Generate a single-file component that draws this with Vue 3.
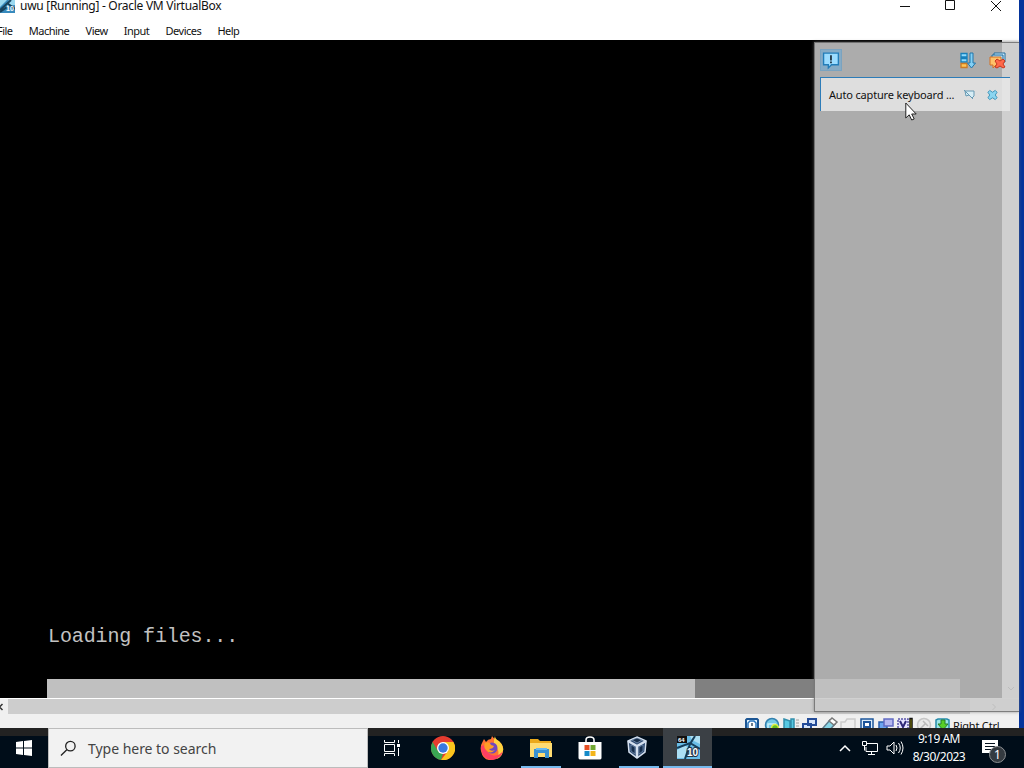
<script setup>
import { ref } from "vue";

const menus = ref(["File", "Machine", "View", "Input", "Devices", "Help"]);
const progress = ref(71);
</script>

<template>
  <div class="desktop">
    <section class="vm-window">
      <header class="title-bar">
        <svg class="title-icon" viewBox="0 0 15 13">
          <path d="M0 0h15v13H0z" fill="#388abd" />
          <path d="M0 0h7L0 7zM9 0h6v5l-8 1z" fill="#9bd8ef" />
          <path d="M0 10 11 0M7 3l8 6M0 12l7-5" stroke="#17435e" stroke-width="2" />
          <text x="6" y="11" class="mini-ten">10</text>
        </svg>
        <span class="title-text">uwu [Running] - Oracle VM VirtualBox</span>
        <svg class="window-buttons" viewBox="0 0 104 14" fill="none" stroke="#111">
          <path d="M1 6.500h10M46.500 .5h9v9h-9zM92 1l10 10M102 1 92 11" />
        </svg>
      </header>

      <nav class="menu-bar">
        <span v-for="menu in menus" :key="menu">{{ menu }}</span>
      </nav>

      <div class="viewport">
        <main class="guest-screen">
          <p class="loading">Loading files...</p>
          <div class="progress">
            <div class="progress-fill" :style="{ width: progress + '%' }"></div>
          </div>
        </main>
        <div class="vertical-scroll">
          <svg viewBox="0 0 8 6" fill="none" stroke="#777">
            <path d="m1 1 3 3 3-3" />
          </svg>
        </div>
      </div>
      <div class="horizontal-scroll">
        <svg viewBox="0 0 4 8" fill="none" stroke="#333" stroke-width="1.500">
          <path d="M2.500 1-.5 4l3 3" />
        </svg>
        <svg viewBox="0 0 4 8" fill="none" stroke="#777">
          <path d="m.5 1 3 3-3 3" />
        </svg>
      </div>

      <footer class="status-bar">
        <svg class="status-icons" viewBox="0 0 208 14">
          <g stroke-width="1.500">
            <path d="M2 16V6l1-1h10l1 1v10" fill="#eaf8ff" stroke="#1c5694" stroke-width="2" />
            <path d="M4 14V9l2-2h4l2 2v5" fill="#fff" stroke="#2974bd" />
            <path d="M7 9h2v3H7z" fill="#6b7b8b" />
            <circle cx="28" cy="11" r="6.500" fill="#74c9e8" stroke="#3380ae" />
            <path d="M24 14v-4h8" fill="none" stroke="#c6effa" />
            <circle cx="31" cy="14" r="3.500" fill="#66be23" stroke="#e1ed48" />
            <path d="m40 5 6 2v9h-6zM47 5h3v12h-3z" fill="#57c9e2" stroke="#328fac" />
            <path d="M52 6h3M52 9h3M52 12h3" stroke="#bbb" />
            <path d="M64 5h8v6h-8zM59 10h8v5h-8z" fill="#d5e4f9" stroke="#244c98" stroke-width="2" />
            <path d="m79 14 7-8 5 4-7 8z" fill="#87d5e6" stroke="#5d7b8b" />
            <path d="m85 7 3-3 5 4-3 3z" fill="#fff" stroke="#777" />
            <path d="M97 8h4l2-3h8v12H97z" fill="#eee" stroke="#ccc" />
            <path d="M117 5h12v10h-12z" fill="#dcecf8" stroke="#1d559b" />
            <path d="M120 8h6v5h-6z" fill="#fff" stroke="#1d559b" stroke-width="2" />
            <path d="M135 8h8v7h-8z" fill="#6ba4ef" stroke="#285dac" />
            <path d="M140 5h9v7h-9z" fill="#b5b7ef" stroke="#626bc3" />
            <path d="M154 5h10v11h-10z" fill="#e5e3ff" stroke="#5956a8" stroke-dasharray="2 1" />
            <path d="m156 7 3 6 3-6" fill="none" stroke="#2e2878" stroke-width="2" />
            <path d="M166 4.500h2v11h-2z" fill="#fff100" stroke="#111" />
            <circle cx="180" cy="11" r="6.500" fill="#e9e9e9" stroke="#c7c7c7" />
            <path d="m176 15 6-6m-3-2 5 5" stroke="#bbb" />
            <path d="M192 16V6l2-1h9l2 1v10" fill="#9be5e5" stroke="#268bab" />
            <path d="M197 6h4v4h3l-5 6-5-6h3z" fill="#58ce27" stroke="#267f28" stroke-width="1" />
          </g>
        </svg>
        <span class="host-key">Right Ctrl</span>
      </footer>

      <aside class="notifications">
        <div class="notice-tools">
          <div class="notice-toggle">
            <svg viewBox="0 0 18 18">
              <path d="M1.500 2h14v11H9l-3 3v-3H1.500z" fill="#9bdcff" stroke="#227db9" stroke-width="1.300" />
              <path d="M8.500 4v5m0 1v1.500" stroke="#101c28" stroke-width="1.500" />
            </svg>
          </div>
          <svg class="sort-icon" viewBox="0 0 16 17" fill="none">
            <path d="M1 1.500h6v3.500H1zM1 6.500h6v3.500H1z" fill="#8edbff" stroke="#1780bc" stroke-width="1.300" />
            <path d="M1 11.500h6v4H1z" fill="#ffc557" stroke="#cb7b24" stroke-width="1.300" />
            <path d="M10 1h3v10h2.500l-4 5-4-5H10z" fill="#83d0f5" stroke="#2076ac" />
          </svg>
          <svg class="clear-icon" viewBox="0 0 17 17">
            <path d="M5 5V1h11v9h-3" fill="#cbeafa" stroke="#226d9e" />
            <path d="M3 6V3h11v7" fill="#b1dcf3" stroke="#226d9e" />
            <path d="M1 5h11v8H7l-3 3v-3H1z" fill="#ffc168" stroke="#d47124" />
            <path d="m8 7 3 2 3-2 2 2-2 3 2 3-2 1-3-2-3 2-2-1 2-3-2-3z" fill="#ff6849" stroke="#c6371e" />
          </svg>
        </div>
        <article class="notice">
          <span class="notice-text">Auto capture keyboard ...</span>
          <svg viewBox="0 0 12 12">
            <path d="M2 2h9v5L9 9 6 6 3 7zM1 1l9 9" fill="#d7edf5" stroke="#6699b3" />
          </svg>
          <svg viewBox="0 0 12 12">
            <path d="m3 1 3 2 3-2 2 2-2 3 2 3-2 2-3-2-3 2-2-2 2-3-2-3z" fill="#8bd5f0" stroke="#398fb6" />
          </svg>
        </article>
      </aside>
    </section>

    <footer class="taskbar">
      <div class="start">
        <svg viewBox="0 0 16 16" fill="#fff">
          <path d="m0 2 7-1v6.500H0zM8 1l8-1v7.500H8zM0 8.500h7V15l-7-1zM8 8.500h8V16l-8-1z" />
        </svg>
      </div>
      <div class="search">
        <svg viewBox="0 0 18 18" fill="none" stroke="#222" stroke-width="1.400">
          <circle cx="11" cy="6.500" r="5" />
          <path d="m7.500 10-6.500 6.500" />
        </svg>
        <span>Type here to search</span>
      </div>
      <div class="task task-view">
        <svg viewBox="0 0 16 16" fill="none" stroke="#fff">
          <path d="M.5 0v2.500h10V0M.5 16v-2.500h10V16M.5 4.500h10v7H.5zM14.500 0v3M14.500 8v8" />
          <path d="M13 4h3v3h-3z" fill="#fff" stroke="none" />
        </svg>
      </div>
      <div class="task">
        <svg class="app-icon" viewBox="0 0 24 24">
          <circle cx="12" cy="12" r="12" fill="#e63c2f" />
          <path d="M1.600 6 7 15l5 3-2 6A12 12 0 0 1 1.600 6z" fill="#3aa653" />
          <path d="M12 6h10.400A12 12 0 0 1 10 24l7-9z" fill="#fbc51d" />
          <circle cx="12" cy="12" r="6" fill="#fff" />
          <circle cx="12" cy="12" r="4.700" fill="#3979df" />
        </svg>
      </div>
      <div class="task">
        <svg class="app-icon" viewBox="0 0 24 24">
          <path d="M2 7 4 3l2 3q2-3 5-3l1-3q3 4 5 4 7 4 6 11-2 8-11 9T1 15Q0 10 2 7z" fill="#ff7432" />
          <path d="M15 0q0 3 4 5 5 5 4 10-1 6-6 8 3-6 0-11-5-5-2-12z" fill="#ffd43f" />
          <path d="M1 10q0 13 11 14 9-1 11-9-5 6-11 4T5 9z" fill="#ff3f62" />
          <circle cx="12" cy="12" r="5.500" fill="#7149bd" />
          <path d="M5 7q5-2 6 2l3 1q-1 3-5 3 2 3 6 1-5 5-9 0-3-3-1-7z" fill="#ff9e25" />
        </svg>
      </div>
      <div class="task running">
        <svg class="app-icon" viewBox="0 0 24 24">
          <path d="M1 3h8l2 2h11v16H1z" fill="#eba91b" />
          <path d="M1 7h22v14H1z" fill="#ffdc72" />
          <path d="M5 13h15v9h-4v-5H9v5H5z" fill="#3a91d1" />
          <path d="M7 12h11v2H7z" fill="#68baf0" />
        </svg>
      </div>
      <div class="task">
        <svg class="app-icon" viewBox="0 0 24 24">
          <path d="M8 8V4q0-3 4-3t4 3v4" fill="none" stroke="#fff" stroke-width="1.500" />
          <path d="M.5 6h23v16q0 1.500-2 1.500h-19q-2 0-2-1.500z" fill="#fff" />
          <path d="M6.500 9h5v5h-5z" fill="#e65025" />
          <path d="M12.500 9h5v5h-5z" fill="#72a832" />
          <path d="M6.500 15h5v5h-5z" fill="#168bc9" />
          <path d="M12.500 15h5v5h-5z" fill="#f4b51b" />
        </svg>
      </div>
      <div class="task running vbox">
        <svg class="app-icon" viewBox="0 0 24 24" stroke="#d4e0ef" stroke-width="1.500">
          <path d="m12 1 9 4-1 11-8 6-8-6L3 5z" fill="#304c72" />
          <path d="m3 5 9 5 9-5M12 10v12" fill="none" stroke-width="2.500" />
          <path d="m6 9 4 2v7l-4-3zM18 9l-4 2v7l4-3z" fill="#152d4c" stroke="#7895b7" stroke-width=".7" />
          <path d="m7 4 5-2 5 2-5 3z" fill="#182f4b" stroke="#8ba4c2" stroke-width=".7" />
        </svg>
      </div>
      <div class="task running active">
        <svg class="app-icon" viewBox="0 0 24 24">
          <path d="M1 0h23v23H1z" fill="#69bde7" />
          <path d="m1 14 8-5 4 4-5 9H1zM14 0h10v8l-8-4z" fill="#acdff3" />
          <path d="m1 12 13-5 10 6M19 0l-5 8-5 15" fill="none" stroke="#163f5b" stroke-width="2" />
          <path d="M1 0h10v7H1z" fill="#111" />
          <text x="2" y="6" class="bits">64</text>
          <text x="11" y="20" class="version">10</text>
        </svg>
      </div>
      <div class="tray">
        <svg class="chevron" viewBox="0 0 12 8" fill="none" stroke="#fff" stroke-width="1.500">
          <path d="m1 7 5-5 5 5" />
        </svg>
        <svg class="network" viewBox="0 0 17 15" fill="none" stroke="#fff">
          <path d="M5 2.500h10.500v8H4V6M9.500 10.500v3M6 13.500h7M.5.500h4v4h-4zM2.500 4.500v5" />
        </svg>
        <svg class="sound" viewBox="0 0 18 14" fill="none" stroke="#fff">
          <path d="M1 5h3l4-4v12L4 9H1zM10 4q2 3 0 6M12.500 2q3.500 5 0 10M15 .5q4 6.500 0 13" />
        </svg>
        <div class="clock"><span>9:19 AM</span><span>8/30/2023</span></div>
        <div class="action-center">
          <svg viewBox="0 0 16 16">
            <path d="M0 0h16v13h-4v3l-3-3H0z" fill="#fff" />
            <path d="M3 3.500h10M3 6.500h10M3 9.500h7" stroke="#071420" />
          </svg>
          <span class="badge">1</span>
        </div>
      </div>
    </footer>

    <svg class="cursor" viewBox="0 0 12 19">
      <path d="M.8 1v15l3.400-3.200L6.700 18l2.500-1-2.500-5h4.500z" fill="#fff" stroke="#222" />
    </svg>
  </div>
</template>

<style>
html,
body {
  margin: 0;
  overflow: hidden;
}
</style>

<style scoped>
* {
  box-sizing: border-box;
}

svg {
  display: block;
  flex-shrink: 0;
}

.desktop {
  position: relative;
  width: 1024px;
  height: 768px;
  background: #05349b;
  font-family: "Noto Sans", "Open Sans", sans-serif;
  color: #111;
  overflow: hidden;
}

.vm-window {
  position: relative;
  width: 1019px;
  height: 728px;
  background: #fff;
}

.title-bar {
  display: flex;
  height: 20px;
}

.title-icon {
  width: 15px;
  height: 13px;
}

.mini-ten {
  font: bold 7px "Liberation Sans", sans-serif;
  fill: white;
}

.title-text {
  margin: 0 0 0 5px;
  font-size: 12px;
  line-height: 12px;
  letter-spacing: -0.29px;
  white-space: pre;
}

.window-buttons {
  width: 104px;
  height: 14px;
  margin-left: auto;
  margin-right: 16px;
}

.menu-bar {
  display: flex;
  gap: 16.3px;
  height: 20px;
  margin-left: -3px;
  font-size: 11px;
  line-height: 22px;
  letter-spacing: -0.52px;
}

.viewport {
  display: flex;
  height: 658px;
}

.guest-screen {
  display: flex;
  flex-direction: column;
  justify-content: flex-end;
  width: 1002px;
  padding-left: 47px;
  background: #000;
}

.loading {
  margin: 0 0 30px 1px;
  color: #c2c2c2;
  font: 20px/24px "Liberation Mono", monospace;
  letter-spacing: -0.12px;
}

.progress {
  width: 913px;
  height: 19px;
  background: #808080;
}

.progress-fill {
  height: 100%;
  background: #c0c0c0;
}

.vertical-scroll {
  display: flex;
  justify-content: center;
  align-items: flex-end;
  width: 17px;
  padding-bottom: 6px;
  background: #f0f0f0;
}

.vertical-scroll svg {
  width: 8px;
  height: 6px;
}

.horizontal-scroll {
  display: flex;
  justify-content: space-between;
  align-items: center;
  height: 16px;
  padding-right: 23px;
  border-top: 1px solid white;
  background: linear-gradient(90deg, #f0f0f0 8px, #cdcdcd 8px, #cdcdcd 970px, #f0f0f0 970px);
}

.horizontal-scroll svg {
  width: 4px;
  height: 8px;
}

.status-bar {
  display: flex;
  height: 14px;
  padding-left: 744px;
  background: #f0f0f0;
}

.status-icons {
  width: 208px;
  height: 14px;
}

.host-key {
  margin: 3px 0 0 1px;
  font-size: 11px;
  line-height: 18px;
  letter-spacing: -0.2px;
  white-space: nowrap;
}

/* floats over the guest display and its scrollbars */
.notifications {
  position: absolute;
  top: 42px;
  left: 814px;
  width: 205px;
  height: 670px;
  padding-left: 6px;
  background: rgba(201, 201, 201, 0.854);
  border: 1px solid rgba(90, 90, 90, 0.7);
  border-right: none;
  box-shadow: 0 0 3px rgba(110, 110, 110, 0.7);
}

.notice-tools {
  display: flex;
  align-items: center;
  height: 34px;
}

.notice-toggle {
  width: 22px;
  height: 22px;
  padding: 1px;
  margin-left: -1px;
  background: #86abc5;
  border: 1px solid #7aa3c0;
}

.notice-toggle svg {
  width: 19px;
  height: 19px;
}

.sort-icon {
  width: 16px;
  height: 17px;
  margin-left: 118px;
}

.clear-icon {
  width: 17px;
  height: 17px;
  margin-left: 13px;
}

.notice {
  display: flex;
  align-items: center;
  width: 190px;
  height: 34px;
  margin-left: -1px;
  padding-left: 7px;
  background: linear-gradient(90deg, #dedede 181px, #e4e4e4 181px);
  border-top: 1px solid #2d7cb8;
  border-left: 1px solid #2d7cb8;
}

.notice-text {
  width: 135px;
  padding-left: 1px;
  font-size: 11px;
  line-height: 16px;
  letter-spacing: -0.17px;
  white-space: nowrap;
}

.notice svg {
  width: 12px;
  height: 12px;
}

.notice svg + svg {
  width: 11px;
  margin-left: 12px;
}

.taskbar {
  position: relative;
  display: flex;
  height: 40px;
  background: linear-gradient(#222 8px, #000d19 8px);
  color: white;
}

.start {
  display: flex;
  justify-content: center;
  align-items: center;
  width: 48px;
}

.start svg {
  width: 16px;
  height: 16px;
}

.search {
  display: flex;
  align-items: center;
  width: 320px;
  padding-left: 11px;
  background: #f2f2f2;
  border: 1px solid #bcbcbc;
  color: #444;
  font-size: 14px;
  letter-spacing: -0.03px;
}

.search svg {
  width: 17px;
  height: 17px;
  margin-right: 11px;
}

.task {
  display: flex;
  justify-content: center;
  align-items: center;
  width: 49px;
}

.task-view {
  width: 50px;
  padding-right: 2px;
}

.task-view svg {
  width: 16px;
  height: 16px;
}

.app-icon {
  width: 24px;
  height: 24px;
}

.running {
  background: linear-gradient(#76b9ed, #76b9ed) center bottom / 40px 2px no-repeat;
}

.vbox {
  padding-right: 3px;
}

.active {
  background: linear-gradient(#3b4045 38px, #76b9ed 38px);
}

.bits {
  font: bold 6px "Liberation Sans", sans-serif;
  fill: white;
}

.version {
  font: bold 10px "Liberation Sans", sans-serif;
  fill: white;
  stroke: #234;
  stroke-width: 2px;
  paint-order: stroke;
}

.tray {
  display: flex;
  align-items: center;
  margin-left: auto;
  padding-right: 18px;
}

.chevron {
  width: 12px;
  height: 8px;
}

.network {
  width: 17px;
  height: 15px;
  margin-left: 11px;
}

.sound {
  width: 18px;
  height: 14px;
  margin-left: 7px;
}

.clock {
  display: flex;
  flex-direction: column;
  align-items: center;
  width: 70px;
  font-size: 12px;
  line-height: 18px;
  letter-spacing: -0.5px;
}

.action-center {
  position: relative;
  width: 24px;
  margin-left: 8px;
}

.action-center svg {
  width: 16px;
  height: 16px;
}

.badge {
  position: absolute;
  left: 7px;
  top: 6px;
  width: 17px;
  height: 17px;
  background: #343a40;
  border: 1px solid #8b8e91;
  border-radius: 50%;
  font-size: 12px;
  line-height: 15px;
  text-align: center;
}

.cursor {
  position: absolute;
  left: 905px;
  top: 102px;
  width: 12px;
  height: 19px;
}
</style>
